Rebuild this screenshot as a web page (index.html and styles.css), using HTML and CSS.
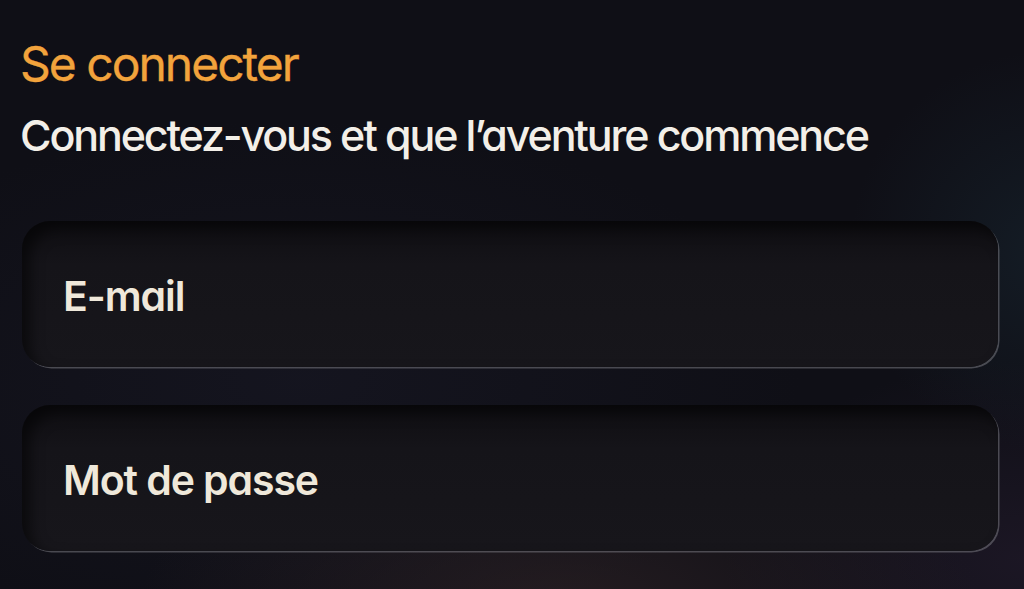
FILE: index.html
```html
<!DOCTYPE html>
<html lang="fr">

<head>
  <meta charset="UTF-8">
  <meta name="viewport" content="width=device-width, initial-scale=1.0">
  <title>Se connecter</title>
  <link rel="stylesheet" href="styles.css">
</head>

<body>

  <main class="login">
    <h1 class="login-title">Se connecter</h1>
    <p class="login-subtitle">Connectez-vous et que l’aventure commence</p>

    <form class="login-form">
      <label class="field">
        <span class="field-label">E-mail</span>
      </label>
      <label class="field">
        <span class="field-label">Mot de passe</span>
      </label>
    </form>
  </main>

</body>

</html>
```

FILE: styles.css
```css
* {
  box-sizing: border-box;
  margin: 0;
  padding: 0;
  font-family: 'Inter', 'Lato', sans-serif;
  font-feature-settings: "cv11";
}

html,
body {
  height: 100%;
}

body {
  background-color: #0f0f16;
  background-image:
    radial-gradient(ellipse 200px 200px at 1050px 250px, rgba(26, 44, 56, 0.45), transparent),
    radial-gradient(ellipse 420px 160px at 560px 600px, rgba(52, 38, 40, 0.55), transparent),
    radial-gradient(ellipse 300px 200px at 1024px 560px, rgba(40, 30, 50, 0.5), transparent),
    radial-gradient(ellipse 500px 260px at 300px 380px, rgba(26, 26, 40, 0.5), transparent);
  color: #f3efe8;
  overflow: hidden;
}

.login {
  padding: 29px 26px 0 20px;
}

.login-title {
  color: #f2a33c;
  font-size: 48px;
  font-weight: 400;
  letter-spacing: -2px;
  line-height: 70px;
  -webkit-text-stroke: 0.3px #f2a33c;
}

.login-subtitle {
  margin-top: 6px;
  font-size: 43px;
  font-weight: 500;
  letter-spacing: -2.15px;
  line-height: 60px;
}

.login-form {
  margin-top: 56px;
  margin-left: 2px;
  display: flex;
  flex-direction: column;
  gap: 38px;
}

.field {
  display: flex;
  align-items: center;
  height: 146px;
  padding: 4px 0 0 41px;
  border-radius: 28px;
  background: linear-gradient(180deg, #0f0e12 0%, #151419 30%, #17161b 100%);
  box-shadow:
    inset 8px 8px 14px rgba(0, 0, 0, 0.55),
    1.5px 1.5px 0 rgba(120, 120, 128, 0.55);
}

.field-label {
  color: #efe8da;
  font-size: 41px;
  font-weight: 600;
  letter-spacing: -1.1px;
}
```
